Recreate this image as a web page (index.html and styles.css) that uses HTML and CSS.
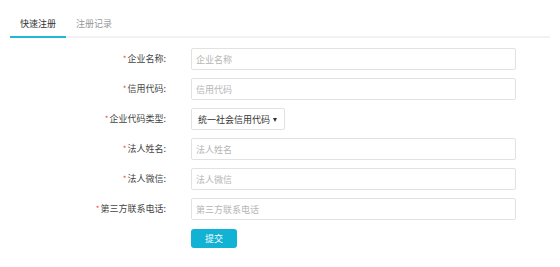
FILE: index.html
```html
<!DOCTYPE html>
<html lang="zh-CN">
<head>
  <meta charset="UTF-8" />
  <title>快速注册</title>
  <meta name="viewport" content="width=device-width, initial-scale=1.0" />
  <link rel="stylesheet" href="styles.css">
</head>
<body>
<div class="tabs">
  <div class="tab active">快速注册</div>
  <div class="tab">注册记录</div>
</div>

<form class="reg-form" onsubmit="return false">
  <label class="lbl" for="company"><span class="req">*</span>企业名称:</label>
  <input class="field" type="text" id="company" placeholder="企业名称" />

  <label class="lbl" for="credit"><span class="req">*</span>信用代码:</label>
  <input class="field" type="text" id="credit" placeholder="信用代码" />

  <label class="lbl" for="codeType"><span class="req">*</span>企业代码类型:</label>
  <div class="select-wrap">
    <select id="codeType" class="select">
      <option>统一社会信用代码</option>
      <option>组织机构代码</option>
    </select>
  </div>

  <label class="lbl" for="legalName"><span class="req">*</span>法人姓名:</label>
  <input class="field" type="text" id="legalName" placeholder="法人姓名" />

  <label class="lbl" for="wechat"><span class="req">*</span>法人微信:</label>
  <input class="field" type="text" id="wechat" placeholder="法人微信" />

  <label class="lbl" for="phone"><span class="req">*</span>第三方联系电话:</label>
  <input class="field" type="text" id="phone" placeholder="第三方联系电话" />

  <span></span>
  <div><button class="submit" type="submit">提交</button></div>
</form>
</body>
</html>
```

FILE: styles.css
```css
body {
  margin: 0;
  background: #fff;
  font-family: "Noto Sans CJK SC", "Noto Sans", sans-serif;
  font-size: 9px;
  color: #333;
}
.tabs {
  display: flex;
  margin: 0 10px;
  padding-top: 16px;
  border-bottom: 2px solid #f2f2f2;
}
.tab {
  line-height: 16px;
  padding: 0 10px 4px;
  color: #999;
  border-bottom: 2px solid transparent;
  margin-bottom: -2px;
  cursor: pointer;
}
.tab.active {
  color: #333;
  border-bottom-color: #1fb8d6;
}
.reg-form {
  display: grid;
  grid-template-columns: 166px 325px;
  column-gap: 25px;
  row-gap: 8px;
  margin-top: 10px;
  align-items: center;
}
.lbl {
  text-align: right;
  color: #444;
  line-height: 22px;
}
.req {
  color: #f04a4a;
  font-size: 8px;
  margin-right: 1px;
}
.field {
  box-sizing: border-box;
  height: 22px;
  width: 100%;
  margin: 0;
  padding: 0 4px;
  border: 1px solid #e2e2e2;
  border-radius: 2px;
  font-family: inherit;
  font-size: 9px;
  color: #333;
  outline: none;
}
.field::placeholder {
  color: #b5b5b5;
}
.select-wrap {
  position: relative;
  width: 94px;
}
.select-wrap::after {
  content: "";
  position: absolute;
  right: 8px;
  top: 10px;
  border-left: 2.5px solid transparent;
  border-right: 2.5px solid transparent;
  border-top: 4px solid #333;
  pointer-events: none;
}
.select {
  appearance: none;
  -webkit-appearance: none;
  box-sizing: border-box;
  width: 100%;
  height: 22px;
  margin: 0;
  padding: 0 4px 0 6px;
  border: 1px solid #e2e2e2;
  border-radius: 2px;
  background: #fff;
  font-family: inherit;
  font-size: 9px;
  color: #333;
  outline: none;
}
.submit {
  width: 46px;
  height: 19px;
  margin-top: 1px;
  padding: 0;
  border: none;
  border-radius: 3px;
  background: #12b2d4;
  color: #fff;
  font-family: inherit;
  font-size: 9px;
  cursor: pointer;
}
```
